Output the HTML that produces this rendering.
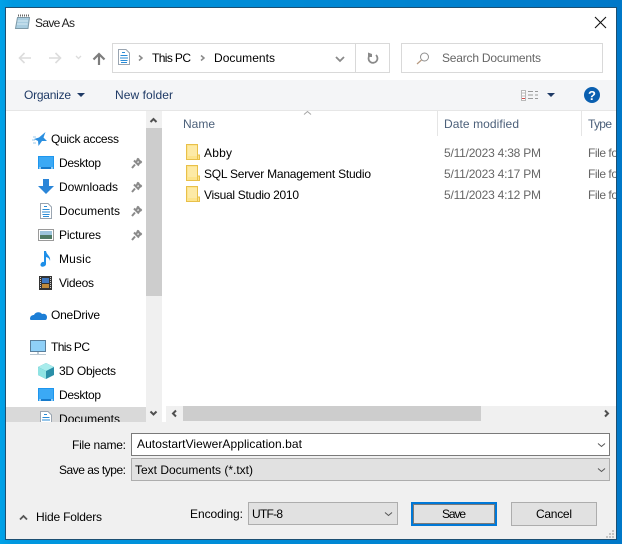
<!DOCTYPE html>
<html>
<head>
<meta charset="utf-8">
<style>
html,body{margin:0;padding:0;width:622px;height:544px;overflow:hidden;background:#0085d0}
svg{display:block}
text{font-family:"Liberation Sans",sans-serif;font-size:12px;fill:#000;white-space:pre}
.h{fill:#4c607a}
.g{fill:#666}
.b{fill:#1f3a66}
</style>
</head>
<body>
<svg xmlns="http://www.w3.org/2000/svg" width="622" height="544" viewBox="0 0 622 544">
<defs>
<linearGradient id="bg" x1="0" y1="0" x2="1" y2="0">
<stop offset="0" stop-color="#00a2e8"/><stop offset="0.02" stop-color="#0098e0"/><stop offset="1" stop-color="#0078c8"/>
</linearGradient>
<clipPath id="win"><rect x="6" y="8" width="610" height="531"/></clipPath>
<clipPath id="nav"><rect x="6" y="110" width="140" height="312"/></clipPath>
<g id="pin"><path d="M3 8.500L0 12M2 4.500L7 9.500M5 2.500L9.500 7M4 6L7 2.500M6.500 8L9.500 5" fill="none" stroke="#8a8a8a" stroke-width="2"/></g>
<g id="folder"><path d="M186.500 0.500H197.500V15.500H186.500Z" fill="#fde48c" stroke="#e8c04a"/><path d="M197.500 11H199.500V15.500H197.500Z" fill="#fde48c" stroke="#e8c04a"/><rect x="188" y="2" width="9" height="10" fill="#fdeaa6"/></g>
<g id="doc"><path d="M1.500 .5H9L12.500 4V15.500H1.500Z" fill="#fff" stroke="#9aa5b1"/><path d="M5 3.500H8M3.500 6.500H10.500M3 9H11M3.500 11.500H10.500M4 13.500H10" stroke="#2a8bd6" fill="none"/></g>
<g id="desk"><rect x="0" y="0" width="16" height="13" fill="#1e96ee"/><rect x="1" y="1" width="14" height="10" fill="#3ba9f5"/><path d="M1 12H15" stroke="#0f5fa8"/><path d="M1 12H3M13 12H15" stroke="#fff"/></g>
</defs>

<rect width="622" height="544" fill="url(#bg)"/>
<rect x="5.500" y="7.500" width="611" height="532" fill="#fff" stroke="#1c4f72"/>

<g clip-path="url(#win)">
<!-- bands -->
<rect x="6" y="80" width="610" height="30" fill="#f4f5f7"/>
<rect x="6" y="110" width="610" height="1" fill="#e6e6e6"/>

<!-- title -->
<path d="M17.500 17.500H29.500L28 28.500H15.500Z" fill="#a9cde0" stroke="#7e9aa8"/>
<path d="M18 15.500H29" stroke="#666" stroke-dasharray="1 1" stroke-width="2"/>
<path d="M17.500 21H28M17 24H27.500" stroke="#d8eaf3"/>
<text x="35" y="27" textLength="40" lengthAdjust="spacing" style="fill:#222">Save As</text>
<path d="M595 17L606 28M606 17L595 28" stroke="#111" stroke-width="1.100" fill="none"/>

<!-- nav arrows -->
<path d="M20 58H31M24.500 53L19.500 58L24.500 63" fill="none" stroke="#dcdcdc" stroke-width="1.600"/>
<path d="M49 58H60M55.500 53L60.500 58L55.500 63" fill="none" stroke="#dcdcdc" stroke-width="1.600"/>
<path d="M76 56L78.500 58.500L81 56" fill="none" stroke="#dcdcdc" stroke-width="1.300"/>
<path d="M99 65V54M93.500 59.500L99 54L104.500 59.500" fill="none" stroke="#7d7d7d" stroke-width="2.200"/>

<!-- address bar -->
<rect x="112.500" y="43.500" width="277" height="29" fill="#fff" stroke="#d9d9d9"/>
<path d="M355.500 44V72" stroke="#d9d9d9"/>
<use href="#doc" x="117" y="49" />
<path d="M139 55.500L142 58L139 60.500" fill="none" stroke="#8a8a8a" stroke-width="1.500"/>
<text x="152" y="62" textLength="39" lengthAdjust="spacing">This PC</text>
<path d="M201 55.500L204 58L201 60.500" fill="none" stroke="#8a8a8a" stroke-width="1.500"/>
<text x="214" y="62" textLength="61" lengthAdjust="spacing">Documents</text>
<path d="M336 57L340 61L344 57" fill="none" stroke="#8a8a8a" stroke-width="1.800"/>
<path d="M376 55A4.500 4.500 0 1 1 369.500 55.500" fill="none" stroke="#8a8a8a" stroke-width="1.800"/>
<path d="M368 52.500L372 54V57H368Z" fill="#8a8a8a"/>

<!-- search -->
<rect x="401.500" y="43.500" width="201" height="29" fill="#fff" stroke="#d9d9d9"/>
<circle cx="424.500" cy="57" r="4" fill="none" stroke="#8f8f8f"/>
<path d="M421.500 60L417 64" stroke="#b89a80" stroke-width="1.200"/>
<text class="g" x="442" y="62" textLength="99" lengthAdjust="spacing">Search Documents</text>

<!-- command bar -->
<text class="b" x="24" y="99" textLength="47" lengthAdjust="spacing">Organize</text>
<path d="M77 93H85L81 97Z" fill="#1f3a66"/>
<text class="b" x="115" y="99" textLength="58" lengthAdjust="spacing">New folder</text>
<rect x="521.500" y="90.500" width="4" height="10" fill="#fff" stroke="#b9b9b9"/>
<path d="M522 93H525M522 96H525" stroke="#b9b9b9"/>
<path d="M522 98.500H525" stroke="#d24b4b"/>
<path d="M528 91.500H533M535 91.500H538M528 95H533M535 95H538M528 98.500H533M535 98.500H538" stroke="#9a9a9a"/>
<path d="M547 93H555L551 97Z" fill="#1f3a66"/>
<circle cx="592" cy="95" r="8" fill="#0a5fb0"/>
<text x="592" y="100" text-anchor="middle" style="font-size:13px;font-weight:bold;fill:#fff">?</text>

<!-- nav pane -->
<rect x="6" y="407" width="140" height="15" fill="#d9d9d9"/>
<g clip-path="url(#nav)">
<path d="M45.500 132L43.500 137.500L47 141L42 141L38.500 146L38 141L34 139L39 137.500Z" fill="#2a8fe0"/>
<path d="M32 140H35M33 143H36M33 137H36" stroke="#9cc9ea"/>
<text x="51" y="143" textLength="68" lengthAdjust="spacing">Quick access</text>

<use href="#desk" x="38" y="156"/>
<text x="59" y="167" textLength="42" lengthAdjust="spacing">Desktop</text>
<use href="#pin" x="132" y="156"/>

<path d="M43 179H49V186H54L46 194L38 186H43Z" fill="#2a85d8"/>
<text x="59" y="191" textLength="59" lengthAdjust="spacing">Downloads</text>
<use href="#pin" x="132" y="180"/>

<use href="#doc" x="39" y="203"/>
<text x="59" y="215" textLength="61" lengthAdjust="spacing">Documents</text>
<use href="#pin" x="132" y="204"/>

<rect x="38.500" y="229.500" width="15" height="11" fill="#fff" stroke="#9a9a9a"/>
<rect x="40" y="231" width="12" height="4" fill="#9cc4dc"/>
<rect x="40" y="235" width="12" height="4" fill="#4e7a64"/>
<text x="59" y="239" textLength="42" lengthAdjust="spacing">Pictures</text>
<use href="#pin" x="132" y="228"/>

<path d="M44 251H46C46.500 255 51 256 50 261C49.500 258.500 48 257.500 46 257V264C46 267 40 268 40.500 264.500C41 262 43 261.500 44 262Z" fill="#1e8fe8"/>
<text x="59" y="263" textLength="32" lengthAdjust="spacing">Music</text>

<rect x="39" y="276" width="13" height="14" fill="#333"/>
<rect x="42" y="278" width="7" height="5" fill="#3f78c0"/>
<rect x="42" y="284" width="7" height="4" fill="#c08a3a"/>
<path d="M40.500 277V289M50.500 277V289" stroke="#ccc" stroke-dasharray="1 1"/>
<text x="59" y="287" textLength="35" lengthAdjust="spacing">Videos</text>

<path d="M30 319C30 316 32 315 34 315C35 312 40 311 42 314C45 313 47 315 47 317C47 319.500 46 320 45 320H32C31 320 30 320 30 319Z" fill="#1c7ed6"/>
<text x="51" y="319" textLength="49" lengthAdjust="spacing">OneDrive</text>

<rect x="30.500" y="340.500" width="15" height="11" fill="#8fd0f8" stroke="#5a7f9c"/>
<path d="M38 352V354M33 354.500H43" stroke="#7a94a8"/>
<path d="M30 354.500H46" stroke="#b9c6d0"/>
<text x="51" y="351" textLength="39" lengthAdjust="spacing">This PC</text>

<path d="M46 363L54 367V375L46 379L38 375V367Z" fill="#2a8fa8"/>
<path d="M38 367L46 363L54 367L46 371Z" fill="#a8ecec"/>
<path d="M38 367L46 371V379L38 375Z" fill="#8fe3e3"/>
<text x="59" y="375" textLength="57" lengthAdjust="spacing">3D Objects</text>

<use href="#desk" x="38" y="388"/>
<text x="59" y="399" textLength="42" lengthAdjust="spacing">Desktop</text>

<use href="#doc" x="39" y="411"/>
<text x="59" y="423" textLength="61" lengthAdjust="spacing">Documents</text>
</g>

<!-- nav scrollbar -->
<rect x="146" y="111" width="16" height="311" fill="#f0f0f0"/>
<rect x="146" y="128" width="16" height="168" fill="#cdcdcd"/>
<path d="M150.500 122L153.500 119L156.500 122" fill="none" stroke="#505050" stroke-width="2"/>
<path d="M150.500 411.500L153.500 414.500L156.500 411.500" fill="none" stroke="#505050" stroke-width="2"/>

<!-- header -->
<text class="h" x="183" y="128" textLength="32" lengthAdjust="spacing">Name</text>
<path d="M304 114.500L307.500 111.500L311 114.500" fill="none" stroke="#a5a5a5"/>
<path d="M437.500 111V136M581.500 111V136" stroke="#e5e5e5"/>
<text class="h" x="444" y="128" textLength="75" lengthAdjust="spacing">Date modified</text>
<text class="h" x="588" y="128" textLength="24" lengthAdjust="spacing">Type</text>

<!-- files -->
<use href="#folder" y="144"/>
<text x="204" y="157" textLength="28" lengthAdjust="spacing">Abby</text>
<text class="g" x="444" y="157" textLength="97" lengthAdjust="spacing">5/11/2023 4:38 PM</text>
<text class="g" x="588" y="157" textLength="30" lengthAdjust="spacing">File fo</text>

<use href="#folder" y="165"/>
<text x="204" y="178" textLength="167" lengthAdjust="spacing">SQL Server Management Studio</text>
<text class="g" x="444" y="178" textLength="97" lengthAdjust="spacing">5/11/2023 4:17 PM</text>
<text class="g" x="588" y="178" textLength="30" lengthAdjust="spacing">File fo</text>

<use href="#folder" y="186"/>
<text x="204" y="199" textLength="95" lengthAdjust="spacing">Visual Studio 2010</text>
<text class="g" x="444" y="199" textLength="97" lengthAdjust="spacing">5/11/2023 4:12 PM</text>
<text class="g" x="588" y="199" textLength="30" lengthAdjust="spacing">File fo</text>

<!-- h scrollbar -->
<rect x="166" y="406" width="450" height="16" fill="#f0f0f0"/>
<rect x="183" y="406" width="298" height="15" fill="#cdcdcd"/>
<path d="M176 410.500L173 413.500L176 416.500" fill="none" stroke="#505050" stroke-width="2"/>
<path d="M605 410.500L608 413.500L605 416.500" fill="none" stroke="#505050" stroke-width="2"/>

<!-- bottom panel -->
<rect x="6" y="422" width="610" height="117" fill="#f0f0f0"/>
<text x="72" y="449" textLength="54" lengthAdjust="spacing">File name:</text>
<rect x="131.500" y="433.500" width="478" height="22" fill="#fff" stroke="#7a7a7a"/>
<text x="137" y="448" textLength="165" lengthAdjust="spacing">AutostartViewerApplication.bat</text>
<path d="M598 443.500L601.500 446.500L605 443.500" fill="none" stroke="#555"/>

<text x="59" y="474" textLength="67" lengthAdjust="spacing">Save as type:</text>
<rect x="131.500" y="458.500" width="478" height="22" fill="#e1e1e1" stroke="#adadad"/>
<text x="135" y="474" textLength="118" lengthAdjust="spacing">Text Documents (*.txt)</text>
<path d="M598 468.500L601.500 471.500L605 468.500" fill="none" stroke="#555"/>

<path d="M20 519.500L23.500 516L27 519.500" fill="none" stroke="#555" stroke-width="1.800"/>
<text x="36" y="521" textLength="66" lengthAdjust="spacing">Hide Folders</text>

<text x="190" y="518" textLength="53" lengthAdjust="spacing">Encoding:</text>
<rect x="248.500" y="502.500" width="149" height="22" fill="#e1e1e1" stroke="#adadad"/>
<text x="252" y="518" textLength="31" lengthAdjust="spacing">UTF-8</text>
<path d="M385 512.500L388.500 515.500L392 512.500" fill="none" stroke="#555"/>

<rect x="412" y="503" width="84" height="22" fill="#e1e1e1" stroke="#0078d7" stroke-width="2"/>
<rect x="413.500" y="504.500" width="81" height="19" fill="none" stroke="#111" stroke-dasharray="1 1"/>
<text x="442" y="518" textLength="24" lengthAdjust="spacing">Save</text>

<rect x="511.500" y="502.500" width="85" height="23" fill="#e1e1e1" stroke="#adadad"/>
<text x="536" y="518" textLength="36" lengthAdjust="spacing">Cancel</text>

<path d="M612 530h2v2h-2zM609 533h2v2h-2zM612 533h2v2h-2zM606 536h2v2h-2zM609 536h2v2h-2zM612 536h2v2h-2z" fill="#c4c4c4"/>
</g>
</svg>
</body>
</html>
